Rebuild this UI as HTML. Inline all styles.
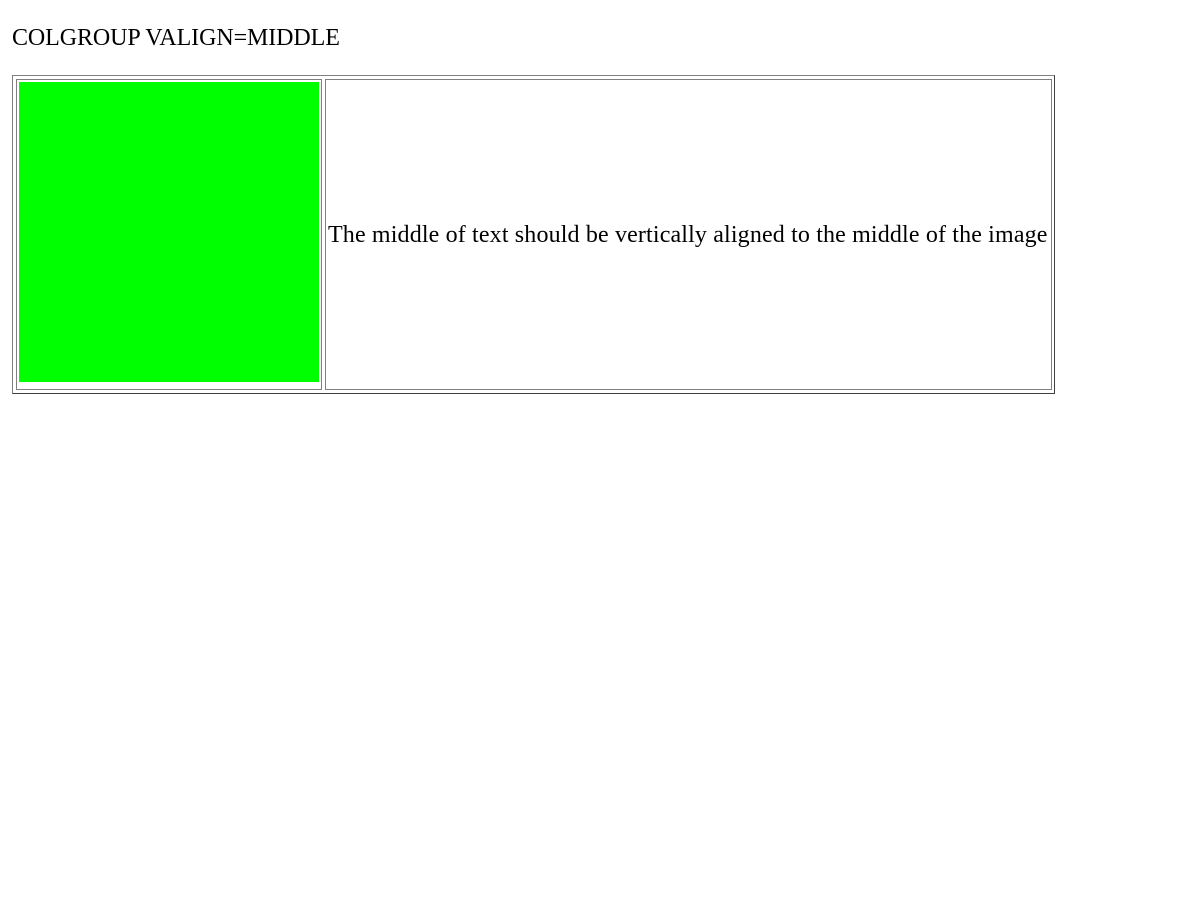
<!DOCTYPE html>
<html><head><style>
body{margin:0;background:#fff;font-family:"Liberation Serif",serif;color:#000}
.a{position:absolute;box-sizing:border-box}
</style></head><body>
<div class="a" style="left:12px;top:23px;font-size:24px;line-height:30px;white-space:nowrap;letter-spacing:-0.09px">COLGROUP VALIGN=MIDDLE</div>
<div class="a" style="left:12px;top:75px;width:1043px;height:319px;border:1px solid #404040;border-top-color:#808080;border-left-color:#808080"></div>
<div class="a" style="left:16px;top:79px;width:306px;height:311px;border:1px solid #808080"></div>
<div class="a" style="left:19px;top:82px;width:300px;height:300px;background:#00ff00"></div>
<div class="a" style="left:325px;top:79px;width:727px;height:311px;border:1px solid #808080"></div>
<div class="a" style="left:328px;top:220px;font-size:24px;line-height:30px;white-space:nowrap;letter-spacing:0.15px">The middle of text should be vertically aligned to the middle of the image</div>
</body></html>
